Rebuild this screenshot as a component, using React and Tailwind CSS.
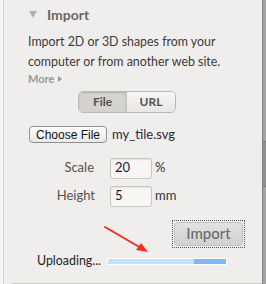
export default function App() {
  return (
    <div className="relative w-[266px] h-[284px] flex bg-[#f0eeec] overflow-hidden font-['Lato',sans-serif]">
      <div className="w-[4px] shrink-0 bg-[#f6f5f4] border-r border-[#d4d2d0]" />
      <div className="flex-1 flex flex-col">
        <div className="flex items-center pl-[25px] pt-[5px] h-[25px]">
          <svg width="8" height="8" viewBox="0 0 8 8" className="mr-[10px]">
            <polygon points="0,0 8,0 4,7" fill="#b3b1ae" />
          </svg>
          <span className="text-[14px] leading-[20px] font-bold text-[#6a6866]">Import</span>
        </div>
        <p className="mt-[7px] pl-[24px] text-[12.4px] leading-[20px] text-[#3c3a38]">
          Import 2D or 3D shapes from your
          <br />
          computer or from another web site.
        </p>
        <div className="mt-[0px] pl-[24px] text-[11px] leading-[14px] font-bold text-[#9a9896] flex items-center">
          More
          <svg width="5" height="6" viewBox="0 0 5 6" className="ml-[4px]">
            <polygon points="0,0 4,3 0,6" fill="#9a9896" />
          </svg>
        </div>
        <div className="mt-[5px] ml-[74px] w-[98px] h-[22px] flex rounded-[5px] border border-[#bab8b5] overflow-hidden text-[12px] font-bold text-[#555350]">
          <div className="w-[48px] flex items-center justify-center bg-[#d5d3cf] shadow-[inset_0_1px_2px_rgba(0,0,0,0.15)] border-r border-[#c4c2bf]">
            File
          </div>
          <div className="flex-1 flex items-center justify-center bg-gradient-to-b from-[#f8f7f5] to-[#e9e7e4]">
            URL
          </div>
        </div>
        <div className="mt-[12px] pl-[25px] flex items-center">
          <div className="w-[78px] h-[17px] rounded-[4px] border border-[#8f8f8f] bg-gradient-to-b from-[#ffffff] to-[#e9e9e9] flex items-center justify-center text-[12px] font-['Liberation_Sans',sans-serif] text-[#111]">
            Choose File
          </div>
          <span className="ml-[5px] text-[13px] text-[#2a2840]">my_tile.svg</span>
        </div>
        <div className="mt-[13px] flex items-center">
          <span className="w-[90px] text-right text-[13px] text-[#555350]">Scale</span>
          <div className="ml-[16px] w-[42px] h-[21px] rounded-[3px] border border-[#c9c5bf] bg-[#f7f6f4] shadow-[inset_0_1px_1px_rgba(0,0,0,0.08)] flex items-center pl-[4px] text-[13px] text-[#1a1a40]">
            20
          </div>
          <span className="ml-[3px] text-[13px] text-[#333]">%</span>
        </div>
        <div className="mt-[7px] flex items-center">
          <span className="w-[91px] text-right text-[13px] text-[#555350]">Height</span>
          <div className="ml-[15px] w-[42px] h-[21px] rounded-[3px] border border-[#c9c5bf] bg-[#f7f6f4] shadow-[inset_0_1px_1px_rgba(0,0,0,0.08)] flex items-center pl-[4px] text-[13px] text-[#1a1a40]">
            5
          </div>
          <span className="ml-[3px] text-[13px] text-[#333]">mm</span>
        </div>
        <div className="mt-[13px] ml-[168px] w-[73px] h-[28px] border border-dotted border-[#555] p-[1px]">
          <div className="w-full h-full rounded-[4px] border border-[#c2c2c2] bg-gradient-to-b from-[#e2e2e2] to-[#d0d0d0] flex items-center justify-center text-[15px] text-[#6b6b6b] font-medium">
            Import
          </div>
        </div>
        <div className="mt-[6px] pl-[33px] flex items-center h-[16px]">
          <span className="w-[70px] text-[12.4px] text-[#222] whitespace-nowrap">Uploading...</span>
          <div className="w-[120px] h-[7px] border border-white bg-[#c2e1fb] flex justify-end">
            <div className="w-[32px] h-full bg-[#78bbf6]" />
          </div>
        </div>
        <div className="mt-[13px] ml-[8px] border-t border-[#cfcdca]" />
      </div>
      <div className="w-[4px] shrink-0 border-l border-[#838383] bg-[#a4a4a4] flex flex-col">
        <div className="h-[141px]" />
        <div className="h-[46px] bg-[#8f8f8f] border-y border-[#777]" />
      </div>
      <svg className="absolute left-0 top-0 pointer-events-none" width="266" height="284">
        <line x1="105" y1="227" x2="141" y2="248" stroke="#e8321e" strokeWidth="2" strokeLinecap="round" />
        <polygon points="148,252 136,250 141,243" fill="#e8321e" />
      </svg>
    </div>
  );
}
